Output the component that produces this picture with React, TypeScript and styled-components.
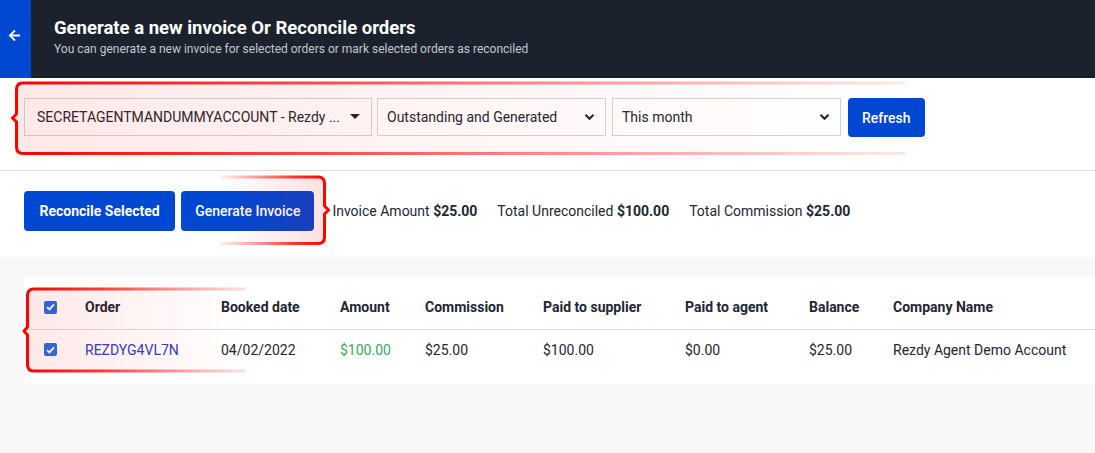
import React from "react";
import styled, { createGlobalStyle } from "styled-components";
import { FaArrowLeft } from "react-icons/fa";

const GlobalStyle = createGlobalStyle`
  html, body { margin: 0; padding: 0; }
  body {
    font-family: Roboto, "Liberation Sans", Arial, sans-serif;
    background: #f8f8f8;
    color: #222631;
  }
  * { box-sizing: border-box; }
`;

const Page = styled.div`
  position: relative;
  width: 1095px;
  min-height: 453px;
  background: #f8f8f8;
  overflow: hidden;
`;

const Header = styled.header`
  display: flex;
  height: 78px;
  background: #1b222d;
`;

const BackStrip = styled.div`
  width: 31px;
  background: #0047d2;
  color: #fff;
  display: flex;
  justify-content: center;
  padding-top: 29px;
  padding-right: 3px;
`;

const HeaderText = styled.div`
  padding: 16px 0 0 23px;
  display: flex;
  flex-direction: column;
`;

const Title = styled.h1`
  margin: 0;
  font-size: 18.5px;
  line-height: 24px;
  font-weight: 700;
  color: #fff;
`;

const Subtitle = styled.p`
  margin: 1px 0 0;
  font-size: 12px;
  line-height: 16px;
  color: #c3c7ce;
`;

const FilterBar = styled.div`
  display: flex;
  align-items: center;
  gap: 5px;
  height: 93px;
  padding: 0 24px 15px;
  background: #fff;
  border-bottom: 1px solid #dcdcdc;
`;

const SelectBox = styled.div<{ $w: number; $pl?: number }>`
  width: ${(p) => p.$w}px;
  height: 38px;
  display: flex;
  align-items: center;
  justify-content: space-between;
  padding: 0 10px 0 ${(p) => p.$pl ?? 12}px;
  border: 1px solid #d4d4d4;
  background: #fff;
  font-size: 14px;
  color: #222631;
  white-space: nowrap;
  overflow: hidden;
`;

const Caret = styled.span`
  width: 0;
  height: 0;
  border-left: 5px solid transparent;
  border-right: 5px solid transparent;
  border-top: 5px solid #222;
  margin-right: 1px;
`;

const PrimaryButton = styled.button<{ $weight?: number; $px?: number }>`
  height: 40px;
  padding: 0 ${(p) => p.$px ?? 16}px;
  border: none;
  border-radius: 4px;
  background: #0047d2;
  color: #fff;
  font-family: Roboto, "Liberation Sans", Arial, sans-serif;
  font-size: 14px;
  font-weight: ${(p) => p.$weight ?? 700};
  cursor: pointer;
`;

const RefreshButton = styled(PrimaryButton)`
  margin-left: 2px;
  margin-top: 2px;
  height: 39px;
`;

const ActionBar = styled.div`
  display: flex;
  align-items: center;
  height: 86px;
  padding: 0 24px 6px;
  background: #fff;
  gap: 6px;
`;

const Summary = styled.div`
  display: flex;
  gap: 20px;
  margin-left: 12px;
  font-size: 14px;
  color: #222631;
  b { font-weight: 700; }
`;

const Content = styled.div`
  padding: 20px 0 0 24px;
`;

const Card = styled.div`
  background: #fff;
  height: 107px;
`;

const cols = "61px 136px 119px 85px 118px 142px 124px 84px 1fr";

const Row = styled.div<{ $head?: boolean }>`
  display: grid;
  grid-template-columns: ${cols};
  align-items: center;
  height: 53px;
  padding: ${(p) => (p.$head ? "8px 0 0" : "0 0 14px")};
  font-size: 14px;
  font-weight: ${(p) => (p.$head ? 700 : 400)};
  color: #222631;
  border-bottom: ${(p) => (p.$head ? "1px solid #dcdcdc" : "none")};
`;

const Cell = styled.div<{ $color?: string }>`
  color: ${(p) => p.$color ?? "inherit"};
  white-space: nowrap;
`;

const CheckCell = styled.div`
  padding-left: 20px;
  display: flex;
  align-items: center;
`;

const Check = styled.span`
  width: 13px;
  height: 13px;
  border-radius: 2px;
  background: #1f6fe5;
  display: inline-flex;
  align-items: center;
  justify-content: center;
`;

const Overlay = styled.svg`
  position: absolute;
  left: 0;
  top: 0;
  pointer-events: none;
`;

const Chevron = () => (
  <svg width="11" height="8" viewBox="0 0 11 8">
    <path d="M1.5 1.8 L5.5 5.8 L9.5 1.8" fill="none" stroke="#222" strokeWidth="2" />
  </svg>
);

const Checkbox = () => (
  <Check>
    <svg width="9" height="8" viewBox="0 0 9 8">
      <path d="M1 4.2 L3.4 6.4 L8 1.4" fill="none" stroke="#fff" strokeWidth="1.8" />
    </svg>
  </Check>
);

export default function App() {
  return (
    <Page>
      <GlobalStyle />
      <Header>
        <BackStrip>
          <FaArrowLeft size={13} />
        </BackStrip>
        <HeaderText>
          <Title>Generate a new invoice Or Reconcile orders</Title>
          <Subtitle>
            You can generate a new invoice for selected orders or mark selected orders as reconciled
          </Subtitle>
        </HeaderText>
      </Header>

      <FilterBar>
        <SelectBox $w={348}>
          <span>SECRETAGENTMANDUMMYACCOUNT - Rezdy ...</span>
          <Caret />
        </SelectBox>
        <SelectBox $w={229} $pl={9}>
          <span>Outstanding and Generated</span>
          <Chevron />
        </SelectBox>
        <SelectBox $w={229} $pl={9} style={{ marginLeft: 1 }}>
          <span>This month</span>
          <Chevron />
        </SelectBox>
        <RefreshButton $weight={500} $px={14}>Refresh</RefreshButton>
      </FilterBar>

      <ActionBar>
        <PrimaryButton $px={15.5}>Reconcile Selected</PrimaryButton>
        <PrimaryButton $weight={500} $px={14}>Generate Invoice</PrimaryButton>
        <Summary>
          <span>
            Invoice Amount <b>$25.00</b>
          </span>
          <span>
            Total Unreconciled <b>$100.00</b>
          </span>
          <span>
            Total Commission <b>$25.00</b>
          </span>
        </Summary>
      </ActionBar>

      <Content>
        <Card>
          <Row $head>
            <CheckCell>
              <Checkbox />
            </CheckCell>
            <Cell>Order</Cell>
            <Cell>Booked date</Cell>
            <Cell>Amount</Cell>
            <Cell>Commission</Cell>
            <Cell>Paid to supplier</Cell>
            <Cell>Paid to agent</Cell>
            <Cell>Balance</Cell>
            <Cell>Company Name</Cell>
          </Row>
          <Row>
            <CheckCell>
              <Checkbox />
            </CheckCell>
            <Cell $color="#2a3ec6">REZDYG4VL7N</Cell>
            <Cell>04/02/2022</Cell>
            <Cell $color="#3aa75a">$100.00</Cell>
            <Cell>$25.00</Cell>
            <Cell>$100.00</Cell>
            <Cell>$0.00</Cell>
            <Cell>$25.00</Cell>
            <Cell>Rezdy Agent Demo Account</Cell>
          </Row>
        </Card>
      </Content>

      <Overlay width="1095" height="453" viewBox="0 0 1095 453">
        <defs>
          <linearGradient id="s1" gradientUnits="userSpaceOnUse" x1="16" y1="0" x2="905" y2="0">
            <stop offset="0" stopColor="#ff0000" stopOpacity="1" />
            <stop offset="0.35" stopColor="#ff2020" stopOpacity="0.8" />
            <stop offset="1" stopColor="#ff4040" stopOpacity="0.12" />
          </linearGradient>
          <linearGradient id="f1" gradientUnits="userSpaceOnUse" x1="16" y1="0" x2="905" y2="0">
            <stop offset="0" stopColor="#ff0000" stopOpacity="0.09" />
            <stop offset="0.5" stopColor="#ff0000" stopOpacity="0.04" />
            <stop offset="1" stopColor="#ff0000" stopOpacity="0" />
          </linearGradient>
          <linearGradient id="s2" gradientUnits="userSpaceOnUse" x1="326" y1="0" x2="220" y2="0">
            <stop offset="0" stopColor="#ff0000" stopOpacity="1" />
            <stop offset="0.3" stopColor="#ff1010" stopOpacity="0.85" />
            <stop offset="1" stopColor="#ff4040" stopOpacity="0.08" />
          </linearGradient>
          <linearGradient id="f2" gradientUnits="userSpaceOnUse" x1="326" y1="0" x2="220" y2="0">
            <stop offset="0" stopColor="#ff0000" stopOpacity="0.12" />
            <stop offset="1" stopColor="#ff0000" stopOpacity="0" />
          </linearGradient>
          <linearGradient id="s3" gradientUnits="userSpaceOnUse" x1="26" y1="0" x2="246" y2="0">
            <stop offset="0" stopColor="#ff0000" stopOpacity="1" />
            <stop offset="0.35" stopColor="#ff1a1a" stopOpacity="0.85" />
            <stop offset="1" stopColor="#ff4040" stopOpacity="0.15" />
          </linearGradient>
          <linearGradient id="f3" gradientUnits="userSpaceOnUse" x1="26" y1="0" x2="246" y2="0">
            <stop offset="0" stopColor="#ff0000" stopOpacity="0.09" />
            <stop offset="1" stopColor="#ff0000" stopOpacity="0" />
          </linearGradient>
        </defs>
        <path
          d="M905 83 H23 Q16.5 83 16.5 89.5 V114 L12.5 118 L16.5 122 V147 Q16.5 153.5 23 153.5 H905"
          fill="url(#f1)"
          stroke="url(#s1)"
          strokeWidth="3"
          strokeLinejoin="round"
        />
        <path
          d="M220 177 H318 Q324.5 177 324.5 183.5 V206 L328.5 210 L324.5 214 V237 Q324.5 243.5 318 243.5 H220"
          fill="url(#f2)"
          stroke="url(#s2)"
          strokeWidth="3"
          strokeLinejoin="round"
        />
        <path
          d="M246 289 H34 Q27.5 289 27.5 295.5 V327 L24 331 L27.5 335 V364.5 Q27.5 371 34 371 H246"
          fill="url(#f3)"
          stroke="url(#s3)"
          strokeWidth="3"
          strokeLinejoin="round"
        />
      </Overlay>
    </Page>
  );
}
